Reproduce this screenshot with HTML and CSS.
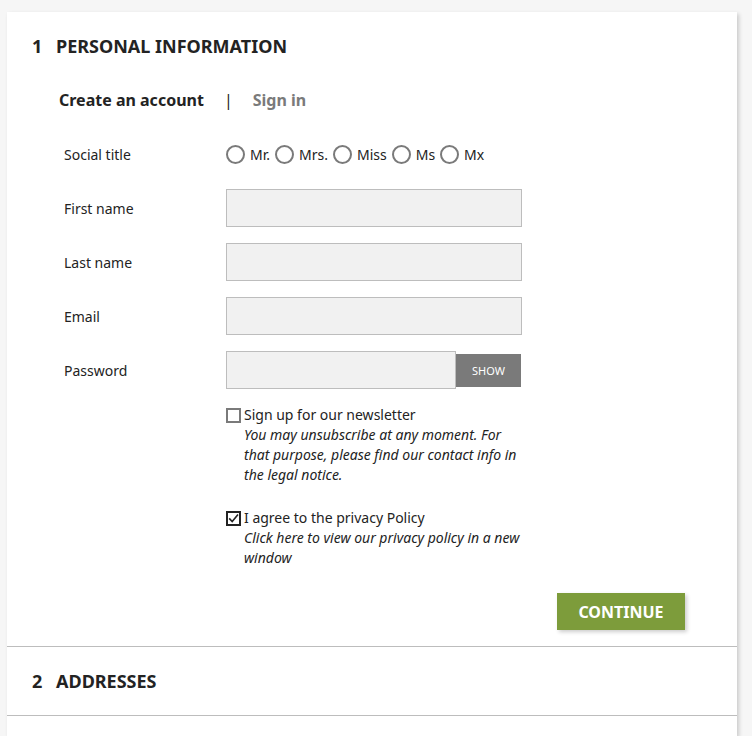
FILE: index.html
```html
<!DOCTYPE html>
<html lang="en">
<head>
<meta charset="utf-8">
<title>Checkout</title>
<link rel="stylesheet" href="styles.css">
</head>
<body>
<main class="card">
  <section class="step step-current">
    <h1 class="step-title"><span class="step-number">1</span>Personal Information</h1>
    <div class="step-content">
      <ul class="tabs">
        <li class="tab active">Create an account</li>
        <li class="tab-sep">|</li>
        <li class="tab">Sign in</li>
      </ul>
      <form class="form">
        <div class="row">
          <label class="label">Social title</label>
          <div class="field radios">
            <label class="radio"><span class="radio-dot"></span>Mr.</label>
            <label class="radio"><span class="radio-dot"></span>Mrs.</label>
            <label class="radio"><span class="radio-dot"></span>Miss</label>
            <label class="radio"><span class="radio-dot"></span>Ms</label>
            <label class="radio"><span class="radio-dot"></span>Mx</label>
          </div>
        </div>
        <div class="row">
          <label class="label">First name</label>
          <div class="field"><span class="input"></span></div>
        </div>
        <div class="row">
          <label class="label">Last name</label>
          <div class="field"><span class="input"></span></div>
        </div>
        <div class="row">
          <label class="label">Email</label>
          <div class="field"><span class="input"></span></div>
        </div>
        <div class="row">
          <label class="label">Password</label>
          <div class="field group">
            <span class="input input-pw"></span>
            <span class="show-btn">Show</span>
          </div>
        </div>
        <div class="check-row first">
          <div class="check-line"><span class="checkbox"></span>Sign up for our newsletter</div>
          <p class="note">You may unsubscribe at any moment. For that purpose, please find our contact info in the legal notice.</p>
        </div>
        <div class="check-row second">
          <div class="check-line"><span class="checkbox checked"><svg viewBox="0 0 15 15" width="15" height="15"><path d="M3.2 7.4 L6.2 10.6 L12 3.6" fill="none" stroke="#232323" stroke-width="1.6"/></svg></span>I agree to the privacy Policy</div>
          <p class="note">Click here to view our privacy policy in a new window</p>
        </div>
        <div class="footer">
          <span class="continue">Continue</span>
        </div>
      </form>
    </div>
  </section>
  <section class="step">
    <h1 class="step-title"><span class="step-number">2</span>Addresses</h1>
  </section>
  <section class="step step-last"></section>
</main>
</body>
</html>
```

FILE: styles.css
```css
* { box-sizing: border-box; }
html, body { margin: 0; padding: 0; }
body {
  background: #f6f6f6;
  font-family: "Noto Sans", "Open Sans", sans-serif;
  color: #232323;
  padding: 12px 0 0 7px;
  height: 736px;
  overflow: hidden;
}
.card {
  width: 730px;
  background: #fff;
  box-shadow: 2px 2px 4px rgba(0,0,0,0.18);
  min-height: 724px;
}
.step { border-bottom: 1px solid #bdbdbd; }
.step-last { border-bottom: none; }
.step-title {
  margin: 0;
  padding: 23px 25px;
  font-size: 18px;
  line-height: 22px;
  font-weight: 700;
  text-transform: uppercase;
  color: #232323;
  display: flex;
}
.step-number { width: 24px; }
.step-content { padding: 8px 0 16px 0; }
.tabs {
  list-style: none;
  margin: 0 0 23px 0;
  padding: 0 0 0 52px;
  display: flex;
  font-size: 16px;
  line-height: 24px;
  font-weight: 700;
}
.tab { color: #7a7a7a; }
.tab.active { color: #232323; }
.tab-sep { color: #232323; font-weight: 400; margin: 0 20px 0 20px; }
.form { display: flex; flex-direction: column; }
.row {
  display: flex;
  align-items: center;
  height: 38px;
  margin-bottom: 16px;
}
.label {
  width: 219px;
  padding-left: 57px;
  font-size: 14px;
}
.field { width: 296px; }
.radios { display: flex; align-items: center; font-size: 14px; }
.radio { display: flex; align-items: center; margin-right: 5px; }
.radio-dot {
  width: 19px;
  height: 19px;
  border: 2px solid #7a7a7a;
  border-radius: 50%;
  margin-right: 5px;
}
.input {
  display: block;
  height: 38px;
  background: #f1f1f1;
  border: 1px solid #bdbdbd;
}
.group { display: flex; align-items: center; }
.input-pw { width: 230px; }
.show-btn {
  width: 65px;
  height: 33px;
  background: #7a7a7a;
  color: #fff;
  font-size: 11px;
  text-transform: uppercase;
  display: flex;
  align-items: center;
  justify-content: center;
}
.check-row {
  margin-left: 219px;
  width: 296px;
  font-size: 14px;
  line-height: 20px;
}
.check-row.first { margin-top: 0; }
.check-row.second { margin-top: 23px; }
.check-line { display: flex; align-items: center; }
.checkbox {
  width: 15px;
  height: 15px;
  border: 2px solid #7a7a7a;
  margin-right: 3px;
  display: flex;
  align-items: center;
  justify-content: center;
}
.checkbox.checked { border-color: #232323; }
.checkbox svg { flex: none; margin: -2px; }
.note {
  margin: 0;
  padding-left: 18px;
  font-style: italic;
  color: #232323;
}
.footer {
  display: flex;
  justify-content: flex-end;
  padding-right: 52px;
  margin-top: 25px;
}
.continue {
  width: 128px;
  height: 37px;
  background: #7d9c3b;
  color: #fff;
  font-weight: 700;
  font-size: 16px;
  text-transform: uppercase;
  display: flex;
  align-items: center;
  justify-content: center;
  box-shadow: 2px 2px 4px rgba(0,0,0,0.2);
}
```
